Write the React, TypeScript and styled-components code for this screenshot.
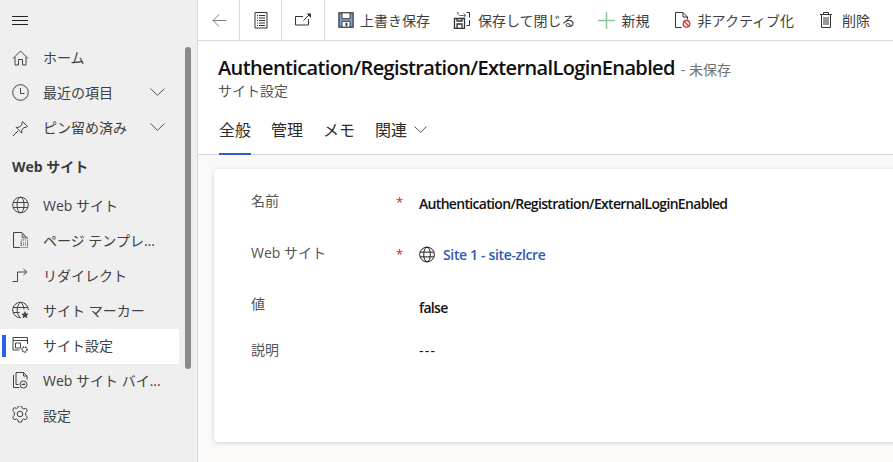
import React from "react";
import styled, { createGlobalStyle } from "styled-components";

const FONT = `"Open Sans", "Noto Sans CJK JP", sans-serif`;

const GlobalStyle = createGlobalStyle`
    html, body {
        margin: 0;
        padding: 0;
        width: 893px;
        height: 462px;
        overflow: hidden;
        font-family: ${FONT};
    }
    * {
        box-sizing: border-box;
    }
`;

interface IconProps {
    size?: number;
    color?: string;
}

const Svg: React.FC<React.PropsWithChildren<IconProps>> = ({ size = 18, color = "#444", children }) => (
    <svg width={size} height={size} viewBox="0 0 18 18" fill="none" stroke={color} strokeWidth={1}>
        {children}
    </svg>
);

const Chevron: React.FC<{ width: number; height: number; className?: string }> = ({ width, height, className }) => (
    <svg className={className} width={width} height={height} viewBox={`0 0 ${width} ${height}`} fill="none" stroke="#555" strokeWidth={1}>
        <path d={`M.5 .5 ${width / 2} ${height - 0.7} ${width - 0.5} .5`} />
    </svg>
);

const HomeIcon = () => (
    <Svg>
        <path d="M1 10.500 8.500 3 16 10.500M3 9v8h3.500v-5.500h4V17H14V9" />
    </Svg>
);
const ClockIcon = () => (
    <Svg>
        <circle cx="8.500" cy="9.500" r="7.800" />
        <path d="M8.500 5v5.500H12.500" />
    </Svg>
);
const PinIcon = () => (
    <Svg>
        <path d="M1 18 6 13M10.500 3.500 15.500 8.500l-1 .6-2.800.6-2 2.500.2 3-5.800-5.800 3-.2 2.500-2 .6-2.800z" />
    </Svg>
);
const GlobeIcon: React.FC<IconProps> = ({ size, color }) => (
    <Svg size={size} color={color}>
        <circle cx="8.500" cy="9" r="7.800" />
        <ellipse cx="8.500" cy="9" rx="3.500" ry="7.800" />
        <path d="M1.200 6.500h14.600M1.200 11.500h14.600" />
    </Svg>
);
const PageIcon = () => (
    <Svg>
        <path d="M8 16.500H1.500v-15h8l6 6" />
        <path d="M10 1.500V7h5.500z" fill="#aaa" stroke="#444" strokeWidth={0.6} />
        <path d="M9 9h6.500v7.500H9zM9 12h6.500M9 14h6.500" strokeDasharray="1 1" />
    </Svg>
);
const RedirectIcon = () => (
    <Svg>
        <path d="M.5 15.500H5.500V6H14.500M11.500 3l3.300 3-3.300 3" />
    </Svg>
);
const MarkerIcon = () => (
    <Svg>
        <path d="M8.500 16.800A7.800 7.800 0 1 1 16.300 9" />
        <path d="M8.500 1.200C4 5 4 13 8.500 16.800M8.500 1.200C11 3.300 12 6 12 8.500M1.200 6.500h14.600M1.200 11.500h6.500" />
        <path d="m13 10 1.200 2.500 2.600.3-1.900 1.800.5 2.600-2.400-1.300-2.400 1.300.5-2.600-1.900-1.800 2.600-.3z" fill="#444" stroke="none" />
    </Svg>
);
const SettingPageIcon = () => (
    <Svg>
        <path d="M7.500 14H1v-12.500h14.500V8M1 4.500h14.500M3.500 7h5v5h-5z" />
        <circle cx="12.500" cy="13.500" r="2.500" strokeWidth={1.500} strokeDasharray="1.600 .8" />
    </Svg>
);
const BindingIcon = () => (
    <Svg>
        <path d="M4 1.500h7.500l3.500 3.500v3.500M4 1.500v12h2.500M11.500 1.500V5h3.500M1.500 4v12.500h6" />
        <circle cx="11.500" cy="13.500" r="3.500" />
        <path d="M9.500 13.500h3.500M11.500 12l1.500 1.500" />
    </Svg>
);
const GearIcon = () => (
    <Svg>
        <g transform="translate(-1 -1)">
            <circle cx="9" cy="9" r="2.800" />
            <path d="M7.400 .9h3.200l.5 2.300 1.500.8 2.200-.8 1.600 2.800-1.700 1.600v2.800l1.700 1.600-1.600 2.800-2.200-.8-1.500.8-.5 2.300H7.400l-.5-2.300-1.500-.8-2.200.8-1.600-2.800 1.700-1.600V7L1.600 5.400l1.600-2.800 2.200.8 1.500-.8z" />
        </g>
    </Svg>
);
const BackIcon = () => (
    <Svg color="#7c7c7c">
        <path d="M16.500 9.500H3.200M9 3.500l-6 6 6 6" />
    </Svg>
);
const FormIcon = () => (
    <Svg color="#333">
        <path d="M3 1.500h12v15.500H3zM7 4.500h6M7 7h6M7 9.500h6M7 12h6M7 14.500h6M5 4.500h1M5 7h1M5 9.500h1M5 12h1M5 14.500h1" />
    </Svg>
);
const OpenIcon = () => (
    <Svg color="#333">
        <path d="M9 5.500H1.500V14H14.500V8M9.500 9.500 15 4" />
        <path d="M12.500 2.500H17V7z" fill="#333" stroke="none" />
    </Svg>
);
const SaveIcon = () => (
    <Svg size={16} color="#333">
        <path d="M1 1h16v16H1z" fill="#7ba3c9" strokeWidth={1.300} />
        <path d="M4.500 1h9v6.500h-9z" fill="#fff" />
        <path d="M4.500 17v-6.500h9V17z" fill="#fff" />
        <path d="M8.500 12h2v4h-2z" fill="#333" stroke="none" />
    </Svg>
);
const SaveCloseIcon = () => (
    <Svg color="#333">
        <path d="M1.500 7.500h10v10h-10zM4 17.500V13h5v4.500M4 7.500v2.500h5V7.500" strokeWidth={1.300} />
        <path d="M5 3.500V1.500h-.5M13.500 1.500h3v5M13.500 14.500h3V9" />
        <path d="M6 4.500h7M10.500 2.500l2.500 2-2.500 2" stroke="#3f78b5" />
    </Svg>
);
const PlusIcon = () => (
    <svg width="17" height="17" viewBox="0 0 17 17" fill="none" stroke="#8cc79b" strokeWidth={1.500}>
        <path d="M8.500 0v17M0 8.500h17" />
    </svg>
);
const DeactivateIcon = () => (
    <Svg color="#333">
        <path d="M7.500 16.500H1.500v-15h7.500l4.500 4.500v2.500M9 1.500V6h4.500" />
        <circle cx="12.500" cy="12.800" r="3.300" stroke="#d13438" strokeWidth={1.300} />
        <path d="m10.300 10.600 4.400 4.400" stroke="#d13438" strokeWidth={1.300} />
    </Svg>
);
const TrashIcon = () => (
    <Svg color="#333">
        <path d="M2 3.500h12M5.500 3.500V1.500h5v2M3.500 3.500v13h9v-13M6 6v8M8 6v8M10 6v8" />
    </Svg>
);

const Page = styled.div`
    display: flex;
    width: 893px;
    height: 462px;
    background: #faf9f8;
    color: #333;
    overflow: hidden;
`;

const Sidebar = styled.nav`
    position: relative;
    flex: 0 0 198px;
    display: flex;
    flex-direction: column;
    background: #efefef;
    border-right: 1px solid #d8d8d8;
`;

const Hamburger = styled.div`
    height: 41px;
    padding: 16px 0 0 12px;

    span {
        display: block;
        width: 16px;
        height: 1px;
        margin-bottom: 3px;
        background: #222;
    }
`;

const SideRow = styled.div<{ $active?: boolean }>`
    position: relative;
    display: flex;
    align-items: center;
    width: 179px;
    height: 35px;
    padding: 0 0 4px 12px;
    background: ${(p) => (p.$active ? "#fff" : "transparent")};
    font-size: 14px;
    color: #404040;

    ${(p) =>
        p.$active &&
        `&::before {
            content: "";
            position: absolute;
            left: 2px;
            top: 6px;
            width: 4px;
            height: 22px;
            background: #2b62e3;
        }`}
`;

const SideIcon = styled.span`
    display: flex;
    flex: 0 0 31px;
`;

const SideLabel = styled.span`
    flex: 1;
    white-space: nowrap;
`;

const SideChevron = styled(Chevron)`
    margin-right: 14px;
`;

const SideHeading = styled.div`
    height: 43px;
    padding: 10px 0 0 12px;
    font-size: 14px;
    font-weight: 700;
    color: #3a3a3a;
`;

const Scrollbar = styled.div`
    position: absolute;
    left: 185px;
    top: 47px;
    width: 6px;
    height: 322px;
    border-radius: 3px;
    background: #8a8a8a;
`;

const Main = styled.main`
    flex: 1;
    min-width: 0;
    display: flex;
    flex-direction: column;
`;

const Toolbar = styled.div`
    display: flex;
    align-items: center;
    height: 41px;
    background: #fff;
    border-bottom: 1px solid #d9d9d9;
    white-space: nowrap;
`;

const IconCell = styled.div<{ $width: number }>`
    display: flex;
    align-items: center;
    justify-content: center;
    width: ${(p) => p.$width}px;
    height: 40px;
    border-right: 1px solid #d9d9d9;
`;

const ToolButton = styled.div<{ $gap: number; $left: number }>`
    display: flex;
    align-items: center;
    gap: ${(p) => p.$gap}px;
    margin-left: ${(p) => p.$left}px;
    font-size: 14px;
    color: #404040;
`;

const Header = styled.header`
    height: 114px;
    padding: 13px 0 0 20px;
    background: #fff;
    border-bottom: 1px solid #d9d9d9;
`;

const TitleRow = styled.div`
    display: flex;
    align-items: baseline;
    height: 28px;
    white-space: nowrap;
`;

const Title = styled.h1`
    margin: 0;
    font-size: 20px;
    line-height: 28px;
    font-weight: 600;
    color: #111;
    letter-spacing: -0.63px;
`;

const Unsaved = styled.span`
    margin-left: 6px;
    font-size: 14px;
    color: #707070;
`;

const EntityName = styled.div`
    font-size: 14px;
    line-height: 18px;
    color: #555;
`;

const Tabs = styled.div`
    display: flex;
    gap: 20px;
    margin: 8px 0 0 1px;
`;

const Tab = styled.div<{ $active?: boolean }>`
    display: flex;
    align-items: center;
    gap: 7px;
    height: 47px;
    padding-bottom: 3px;
    font-size: 16px;
    color: #2b2b2b;
    border-bottom: 2px solid ${(p) => (p.$active ? "#2b5fd0" : "transparent")};
`;

const Content = styled.div`
    flex: 1;
    padding: 14px 0 0 16px;
`;

const Card = styled.section`
    width: 720px;
    height: 273px;
    padding-top: 20px;
    padding-left: 37px;
    background: #fff;
    border-radius: 4px;
    box-shadow: 0 1px 4px rgba(0, 0, 0, 0.16);
`;

const Field = styled.div<{ $height: number }>`
    display: grid;
    grid-template-columns: 145px 23px 1fr;
    height: ${(p) => p.$height}px;
    font-size: 14px;
`;

const FieldLabel = styled.div`
    line-height: 24px;
    color: #555;
`;

const Star = styled.div`
    line-height: 26px;
    color: #d0202c;
    font-size: 13px;
`;

const Value = styled.div<{ $height: number; $plain?: boolean }>`
    display: flex;
    align-items: center;
    gap: 6px;
    height: ${(p) => p.$height}px;
    font-weight: ${(p) => (p.$plain ? 400 : 600)};
    color: #111;
    letter-spacing: ${(p) => (p.$plain ? "1.2px" : "-0.68px")};
`;

const LookupLink = styled.span`
    margin-left: 1px;
    color: #2f5bb0;
    letter-spacing: -0.35px;
`;

const App: React.FC = () => {
    return (
        <Page>
            <GlobalStyle />
            <Sidebar>
                <Hamburger>
                    <span />
                    <span />
                    <span />
                </Hamburger>
                <SideRow>
                    <SideIcon><HomeIcon /></SideIcon>
                    <SideLabel>ホーム</SideLabel>
                </SideRow>
                <SideRow>
                    <SideIcon><ClockIcon /></SideIcon>
                    <SideLabel>最近の項目</SideLabel>
                    <SideChevron width={15} height={8} />
                </SideRow>
                <SideRow>
                    <SideIcon><PinIcon /></SideIcon>
                    <SideLabel>ピン留め済み</SideLabel>
                    <SideChevron width={15} height={8} />
                </SideRow>
                <SideHeading>Web サイト</SideHeading>
                <SideRow>
                    <SideIcon><GlobeIcon /></SideIcon>
                    <SideLabel>Web サイト</SideLabel>
                </SideRow>
                <SideRow>
                    <SideIcon><PageIcon /></SideIcon>
                    <SideLabel>ページ テンプレ...</SideLabel>
                </SideRow>
                <SideRow>
                    <SideIcon><RedirectIcon /></SideIcon>
                    <SideLabel>リダイレクト</SideLabel>
                </SideRow>
                <SideRow>
                    <SideIcon><MarkerIcon /></SideIcon>
                    <SideLabel>サイト マーカー</SideLabel>
                </SideRow>
                <SideRow $active>
                    <SideIcon><SettingPageIcon /></SideIcon>
                    <SideLabel>サイト設定</SideLabel>
                </SideRow>
                <SideRow>
                    <SideIcon><BindingIcon /></SideIcon>
                    <SideLabel>Web サイト バイ...</SideLabel>
                </SideRow>
                <SideRow>
                    <SideIcon><GearIcon /></SideIcon>
                    <SideLabel>設定</SideLabel>
                </SideRow>
                <Scrollbar />
            </Sidebar>
            <Main>
                <Toolbar>
                    <IconCell $width={42}><BackIcon /></IconCell>
                    <IconCell $width={42}><FormIcon /></IconCell>
                    <IconCell $width={43}><OpenIcon /></IconCell>
                    <ToolButton $gap={6} $left={13}><SaveIcon />上書き保存</ToolButton>
                    <ToolButton $gap={7} $left={23}><SaveCloseIcon />保存して閉じる</ToolButton>
                    <ToolButton $gap={7} $left={22}><PlusIcon />新規</ToolButton>
                    <ToolButton $gap={6} $left={24}><DeactivateIcon />非アクティブ化</ToolButton>
                    <ToolButton $gap={6} $left={24}><TrashIcon />削除</ToolButton>
                </Toolbar>
                <Header>
                    <TitleRow>
                        <Title>Authentication/Registration/ExternalLoginEnabled</Title>
                        <Unsaved>- 未保存</Unsaved>
                    </TitleRow>
                    <EntityName>サイト設定</EntityName>
                    <Tabs>
                        <Tab $active>全般</Tab>
                        <Tab>管理</Tab>
                        <Tab>メモ</Tab>
                        <Tab>関連<Chevron width={13} height={7} /></Tab>
                    </Tabs>
                </Header>
                <Content>
                    <Card>
                        <Field $height={52}>
                            <FieldLabel>名前</FieldLabel>
                            <Star>*</Star>
                            <Value $height={28}>Authentication/Registration/ExternalLoginEnabled</Value>
                        </Field>
                        <Field $height={51}>
                            <FieldLabel>Web サイト</FieldLabel>
                            <Star>*</Star>
                            <Value $height={26}><GlobeIcon size={17} color="#111" /><LookupLink>Site 1 - site-zlcre</LookupLink></Value>
                        </Field>
                        <Field $height={46}>
                            <FieldLabel>値</FieldLabel>
                            <Star />
                            <Value $height={30}>false</Value>
                        </Field>
                        <Field $height={46}>
                            <FieldLabel>説明</FieldLabel>
                            <Star />
                            <Value $height={24} $plain>---</Value>
                        </Field>
                    </Card>
                </Content>
            </Main>
        </Page>
    );
};

export default App;
